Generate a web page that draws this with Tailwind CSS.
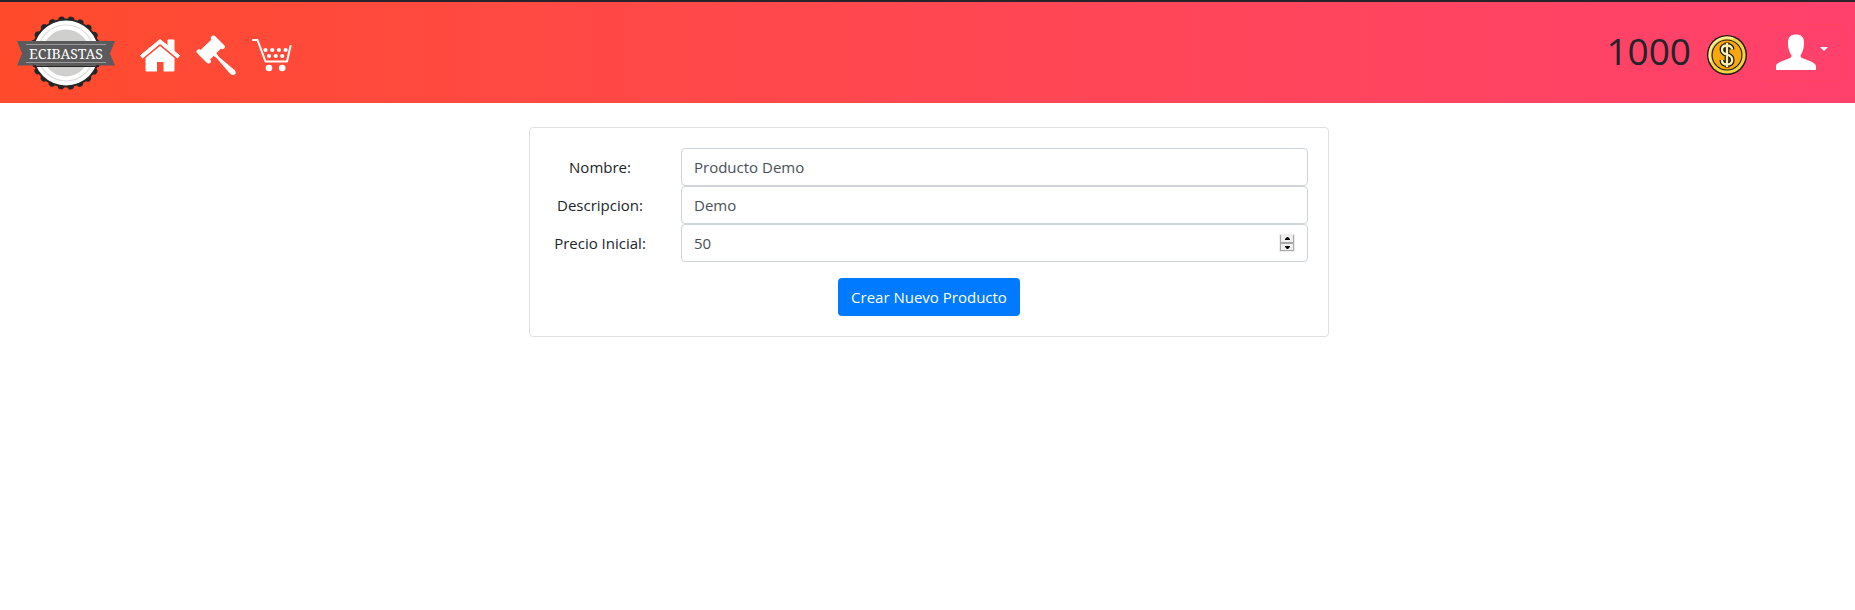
<!DOCTYPE html>
<html lang="es">
<head>
<meta charset="utf-8">
<meta name="viewport" content="width=device-width, initial-scale=1">
<title>ECIBastas</title>
<script src="https://cdn.jsdelivr.net/npm/@tailwindcss/browser@4"></script>
</head>
<body class="min-h-screen bg-white font-['Open_Sans','Noto_Sans',sans-serif] text-[15px] text-[#212529]">
<header class="flex h-[103px] items-center justify-between border-t-2 border-[#24242a] bg-linear-to-r from-[#ff4b2b] to-[#ff416c] pr-3 pl-4">
  <nav class="flex items-center gap-6" aria-label="Principal">
    <a href="#" aria-label="Ecibastas">
      <svg class="h-[76px] w-[100px]" viewBox="0 0 100 76">
        <circle cx="50" cy="38" r="34.500" fill="#252525"/>
        <circle cx="50" cy="38" r="33.500" fill="none" stroke="#252525" stroke-width="6.500" stroke-linecap="round" stroke-dasharray="0.100 9.468"/>
        <circle cx="50" cy="38" r="32.500" fill="#fff"/>
        <circle cx="50" cy="38" r="28" fill="none" stroke="#dedede" stroke-width="1.200"/>
        <circle cx="50" cy="38" r="23.500" fill="#cfd0ce"/>
        <path d="M1 26H99L94 38.500 99 50.500H1L6 38.500Z" fill="#5b5b5d"/>
        <path d="M17 50.500H83V52H17Z" fill="#252525"/>
        <path d="M10 29.500H90M10 47.500H90" stroke="#999" stroke-width="1"/>
        <text x="50" y="43.500" text-anchor="middle" font-family="'Noto Serif','DejaVu Serif Condensed','Liberation Serif',serif" font-size="14" fill="#fff">ECIBASTAS</text>
      </svg>
    </a>
    <div class="mt-1 flex items-center gap-4">
      <a href="#" aria-label="Inicio">
        <svg class="size-10" viewBox="0 0 40 40" fill="#fff">
          <path d="M20 4.500 28 11V5h6v11l5.500 4.500-2 2.500L20 8.500 2.500 23 .5 20.500Z" stroke="#fff" stroke-width="1" stroke-linejoin="round"/>
          <path d="M20 11 34.500 23V35q0 1.500-1.500 1.500H23.500V27h-6.500v9.500H7Q5.500 36.500 5.500 35V23Z"/>
        </svg>
      </a>
      <a href="#" aria-label="Subastas">
        <svg class="size-10" viewBox="0 0 40 40" fill="#fff">
          <path d="M15.500 1.500Q17.500-.5 19.500 1.500L28 10Q30 12 28 13.500 26.500 15 25 13.500L14 24.500Q16 26 14.500 27.800 12.500 29.500 10.500 27.500L1.500 18.500Q-.5 16.500 1.200 15 3 13.500 4.500 15L15.500 4.500Q14 3 15.500 1.500Z"/>
          <path d="m16 20.500 3-3 4 5.500 15.500 13q3 4-1 5-2 .500-4-2L20.500 24Z" transform="translate(0 -1)"/>
        </svg>
      </a>
      <a href="#" aria-label="Carrito">
        <svg class="size-10" viewBox="0 0 40 40" fill="#fff">
          <path d="M1 5H5.500L13.500 26.500H35L38.500 11" fill="none" stroke="#fff" stroke-width="2" stroke-linecap="round" stroke-linejoin="round"/>
          <circle cx="13.500" cy="15" r="2.100"/><circle cx="20.200" cy="15" r="2.100"/><circle cx="26.900" cy="15" r="2.100"/><circle cx="33.600" cy="15" r="2.100"/>
          <circle cx="17" cy="21" r="2.100"/><circle cx="23.700" cy="21" r="2.100"/><circle cx="30.200" cy="21" r="2.100"/>
          <circle cx="17" cy="33" r="3.300"/><circle cx="30.200" cy="33" r="3.300"/>
        </svg>
      </a>
    </div>
  </nav>
  <div class="flex items-center gap-4">
    <span class="pb-1 text-[37px] leading-[52px]">1000</span>
    <svg class="mt-1 size-10" viewBox="0 0 40 40" role="img" aria-label="Monedas">
      <circle cx="20" cy="20" r="20" fill="#1c1b16"/>
      <circle cx="20" cy="20" r="18.600" fill="#f2d340"/>
      <path d="M4 27A17.500 17.500 0 0 1 26 3.500" fill="none" stroke="#fff09a" stroke-width="2"/>
      <circle cx="20" cy="20" r="15.500" fill="#1c1b16"/>
      <circle cx="20" cy="20" r="14.400" fill="#fba70c"/>
      <g fill="none" stroke-linejoin="round">
        <path d="M25 14.500V13.500Q24 10.500 20 10.500 15 10.500 15 14.700 15 18 20 19.500 25.200 21 25.200 25 25.200 29.500 20 29.500 15.500 29.500 15 26V25M20 7.500V32.500" stroke="#1c1b16" stroke-width="4.800"/>
        <path d="M25 14.500V13.500Q24 10.500 20 10.500 15 10.500 15 14.700 15 18 20 19.500 25.200 21 25.200 25 25.200 29.500 20 29.500 15.500 29.500 15 26V25M20 8V32" stroke="#fbeeb0" stroke-width="2.300"/>
      </g>
    </svg>
    <button type="button" aria-label="Cuenta" class="flex h-[58px] items-center gap-1 rounded border border-[#ff455b] pr-3.5 pl-3">
      <svg class="size-10" viewBox="0 0 40 40" fill="#fff">
        <path d="M20 1.500C25.500 1.500 28.500 4.500 28 11 27.700 17 26 20 24.500 22.500Q24.500 24.500 26 25L35 28.500Q40 31 40 33V37H0V33Q0 31 5 28.500L14 25Q15.500 24.500 15.500 22.500C14 20 12.300 17 12 11 11.500 4.500 14.500 1.500 20 1.500Z"/>
      </svg>
      <span class="mb-2 border-x-4 border-t-4 border-x-transparent border-t-white"></span>
    </button>
  </div>
</header>
<main class="flex justify-center pt-6 pl-[3px]">
  <form class="flex w-full max-w-[800px] flex-col items-center gap-4 rounded border border-[#dfdfdf] p-5">
    <div class="grid w-full grid-cols-[100px_1fr] items-center gap-x-[31px] text-center">
      <label for="nombre">Nombre:</label>
      <input id="nombre" type="text" value="Producto Demo" class="h-[38px] w-full rounded border border-[#ced4da] bg-white px-3 text-[#495057]">
      <label for="descripcion">Descripcion:</label>
      <input id="descripcion" type="text" value="Demo" class="h-[38px] w-full rounded border border-[#ced4da] bg-white px-3 text-[#495057]">
      <label for="precio">Precio Inicial:</label>
      <div class="flex h-[38px] items-center rounded border border-[#ced4da] bg-white px-3">
        <input id="precio" type="number" value="50" class="min-w-0 flex-1 [appearance:textfield] text-[#495057] outline-none">
        <div class="flex w-4 flex-col border border-[#eee] bg-[#f0f0f0]">
          <button type="button" aria-label="Aumentar" class="flex h-2 items-center justify-center border-r border-b border-l border-[#a8a8a8]"><svg class="h-[3px] w-[5px]" viewBox="0 0 5 3"><path d="M0 3V2L2 0H3L5 2V3Z"/></svg></button>
          <button type="button" aria-label="Disminuir" class="flex h-2 items-center justify-center border border-[#a8a8a8]"><svg class="h-[3px] w-[5px]" viewBox="0 0 5 3"><path d="M0 0H5V1L3 3H2L0 1Z"/></svg></button>
        </div>
      </div>
    </div>
    <button type="submit" class="h-[38px] rounded bg-[#007bff] px-[13px] text-white">Crear Nuevo Producto</button>
  </form>
</main>
</body>
</html>
